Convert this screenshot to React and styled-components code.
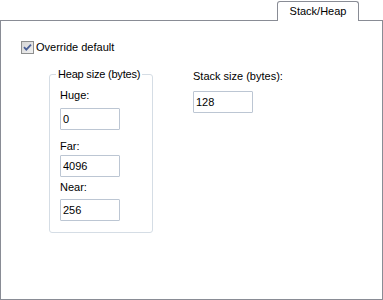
import React from 'react';
import styled, { createGlobalStyle } from 'styled-components';

const Global = createGlobalStyle`
  body {
    margin: 0;
    background: #fff;
    font-family: "Liberation Sans", Arial, sans-serif;
    font-size: 11px;
    color: #000;
  }
`;

const TabControl = styled.div`
  width: 383px;
  height: 300px;
  display: flex;
  flex-direction: column;
  box-sizing: border-box;
`;

const TabStrip = styled.div`
  height: 20px;
  display: flex;
  justify-content: flex-end;
  align-items: flex-end;
  padding-right: 24px;
`;

const Tab = styled.div`
  position: relative;
  top: 1px;
  z-index: 1;
  width: 82px;
  height: 20px;
  box-sizing: border-box;
  border: 1px solid #898c95;
  border-bottom: none;
  border-radius: 3px 3px 0 0;
  background: #fff;
  text-align: center;
  line-height: 13px;
  padding-top: 3px;
`;

const Panel = styled.div`
  flex: 1;
  border: 1px solid #898c95;
  box-sizing: border-box;
  padding: 20px 20px;
`;

const CheckRow = styled.label`
  display: flex;
  align-items: center;
  gap: 2px;
  height: 13px;
  line-height: 13px;
`;

const Body = styled.div`
  display: flex;
  align-items: flex-start;
  margin-top: 14px;
`;

const GroupBox = styled.fieldset`
  margin: 0 0 0 28px;
  width: 104px;
  box-sizing: border-box;
  border: 1px solid #d5dde5;
  border-radius: 3px;
  padding: 0 9px 11px 10px;
  min-width: 0;
`;

const Legend = styled.legend`
  padding: 0 2px;
  margin-left: -4px;
  line-height: 13px;
  white-space: nowrap;
  letter-spacing: -0.2px;
`;

const Field = styled.div`
  display: flex;
  flex-direction: column;
  margin-top: ${({ top }) => top}px;
`;

const Label = styled.span`
  line-height: 13px;
  white-space: nowrap;
  margin-bottom: ${({ gap }) => gap}px;
`;

const Edit = styled.input`
  width: 60px;
  height: 22px;
  box-sizing: border-box;
  border: 1px solid #bcc6d3;
  border-radius: 1px;
  padding: 0 2px;
  margin: 0;
  font: inherit;
  color: #000;
  outline: none;
`;

const StackColumn = styled.div`
  margin-left: 40px;
  margin-top: 2px;
  display: flex;
  flex-direction: column;
`;

const CheckBox = () => (
  <svg width="13" height="13" viewBox="0 0 13 13">
    <defs>
      <linearGradient id="cbfill" x1="0" y1="0" x2="1" y2="1">
        <stop offset="0" stopColor="#d4d4d4" />
        <stop offset="1" stopColor="#f2f2f2" />
      </linearGradient>
    </defs>
    <rect x="0.5" y="0.5" width="12" height="12" fill="url(#cbfill)" stroke="#8e8f8f" />
    <path d="M3 6.2 L5.3 8.6 L10 3.6" fill="none" stroke="#4a5f96" strokeWidth="1.8" />
  </svg>
);

export default function App() {
  return (
    <>
      <Global />
      <TabControl>
        <TabStrip>
          <Tab>Stack/Heap</Tab>
        </TabStrip>
        <Panel>
          <CheckRow>
            <CheckBox />
            <span>Override default</span>
          </CheckRow>
          <Body>
            <GroupBox>
              <Legend>Heap size (bytes)</Legend>
              <Field top={8}>
                <Label gap={6}>Huge:</Label>
                <Edit readOnly value="0" />
              </Field>
              <Field top={10}>
                <Label gap={2}>Far:</Label>
                <Edit readOnly value="4096" />
              </Field>
              <Field top={4}>
                <Label gap={5}>Near:</Label>
                <Edit readOnly value="256" />
              </Field>
            </GroupBox>
            <StackColumn>
              <Label gap={8}>Stack size (bytes):</Label>
              <Edit readOnly value="128" />
            </StackColumn>
          </Body>
        </Panel>
      </TabControl>
    </>
  );
}
